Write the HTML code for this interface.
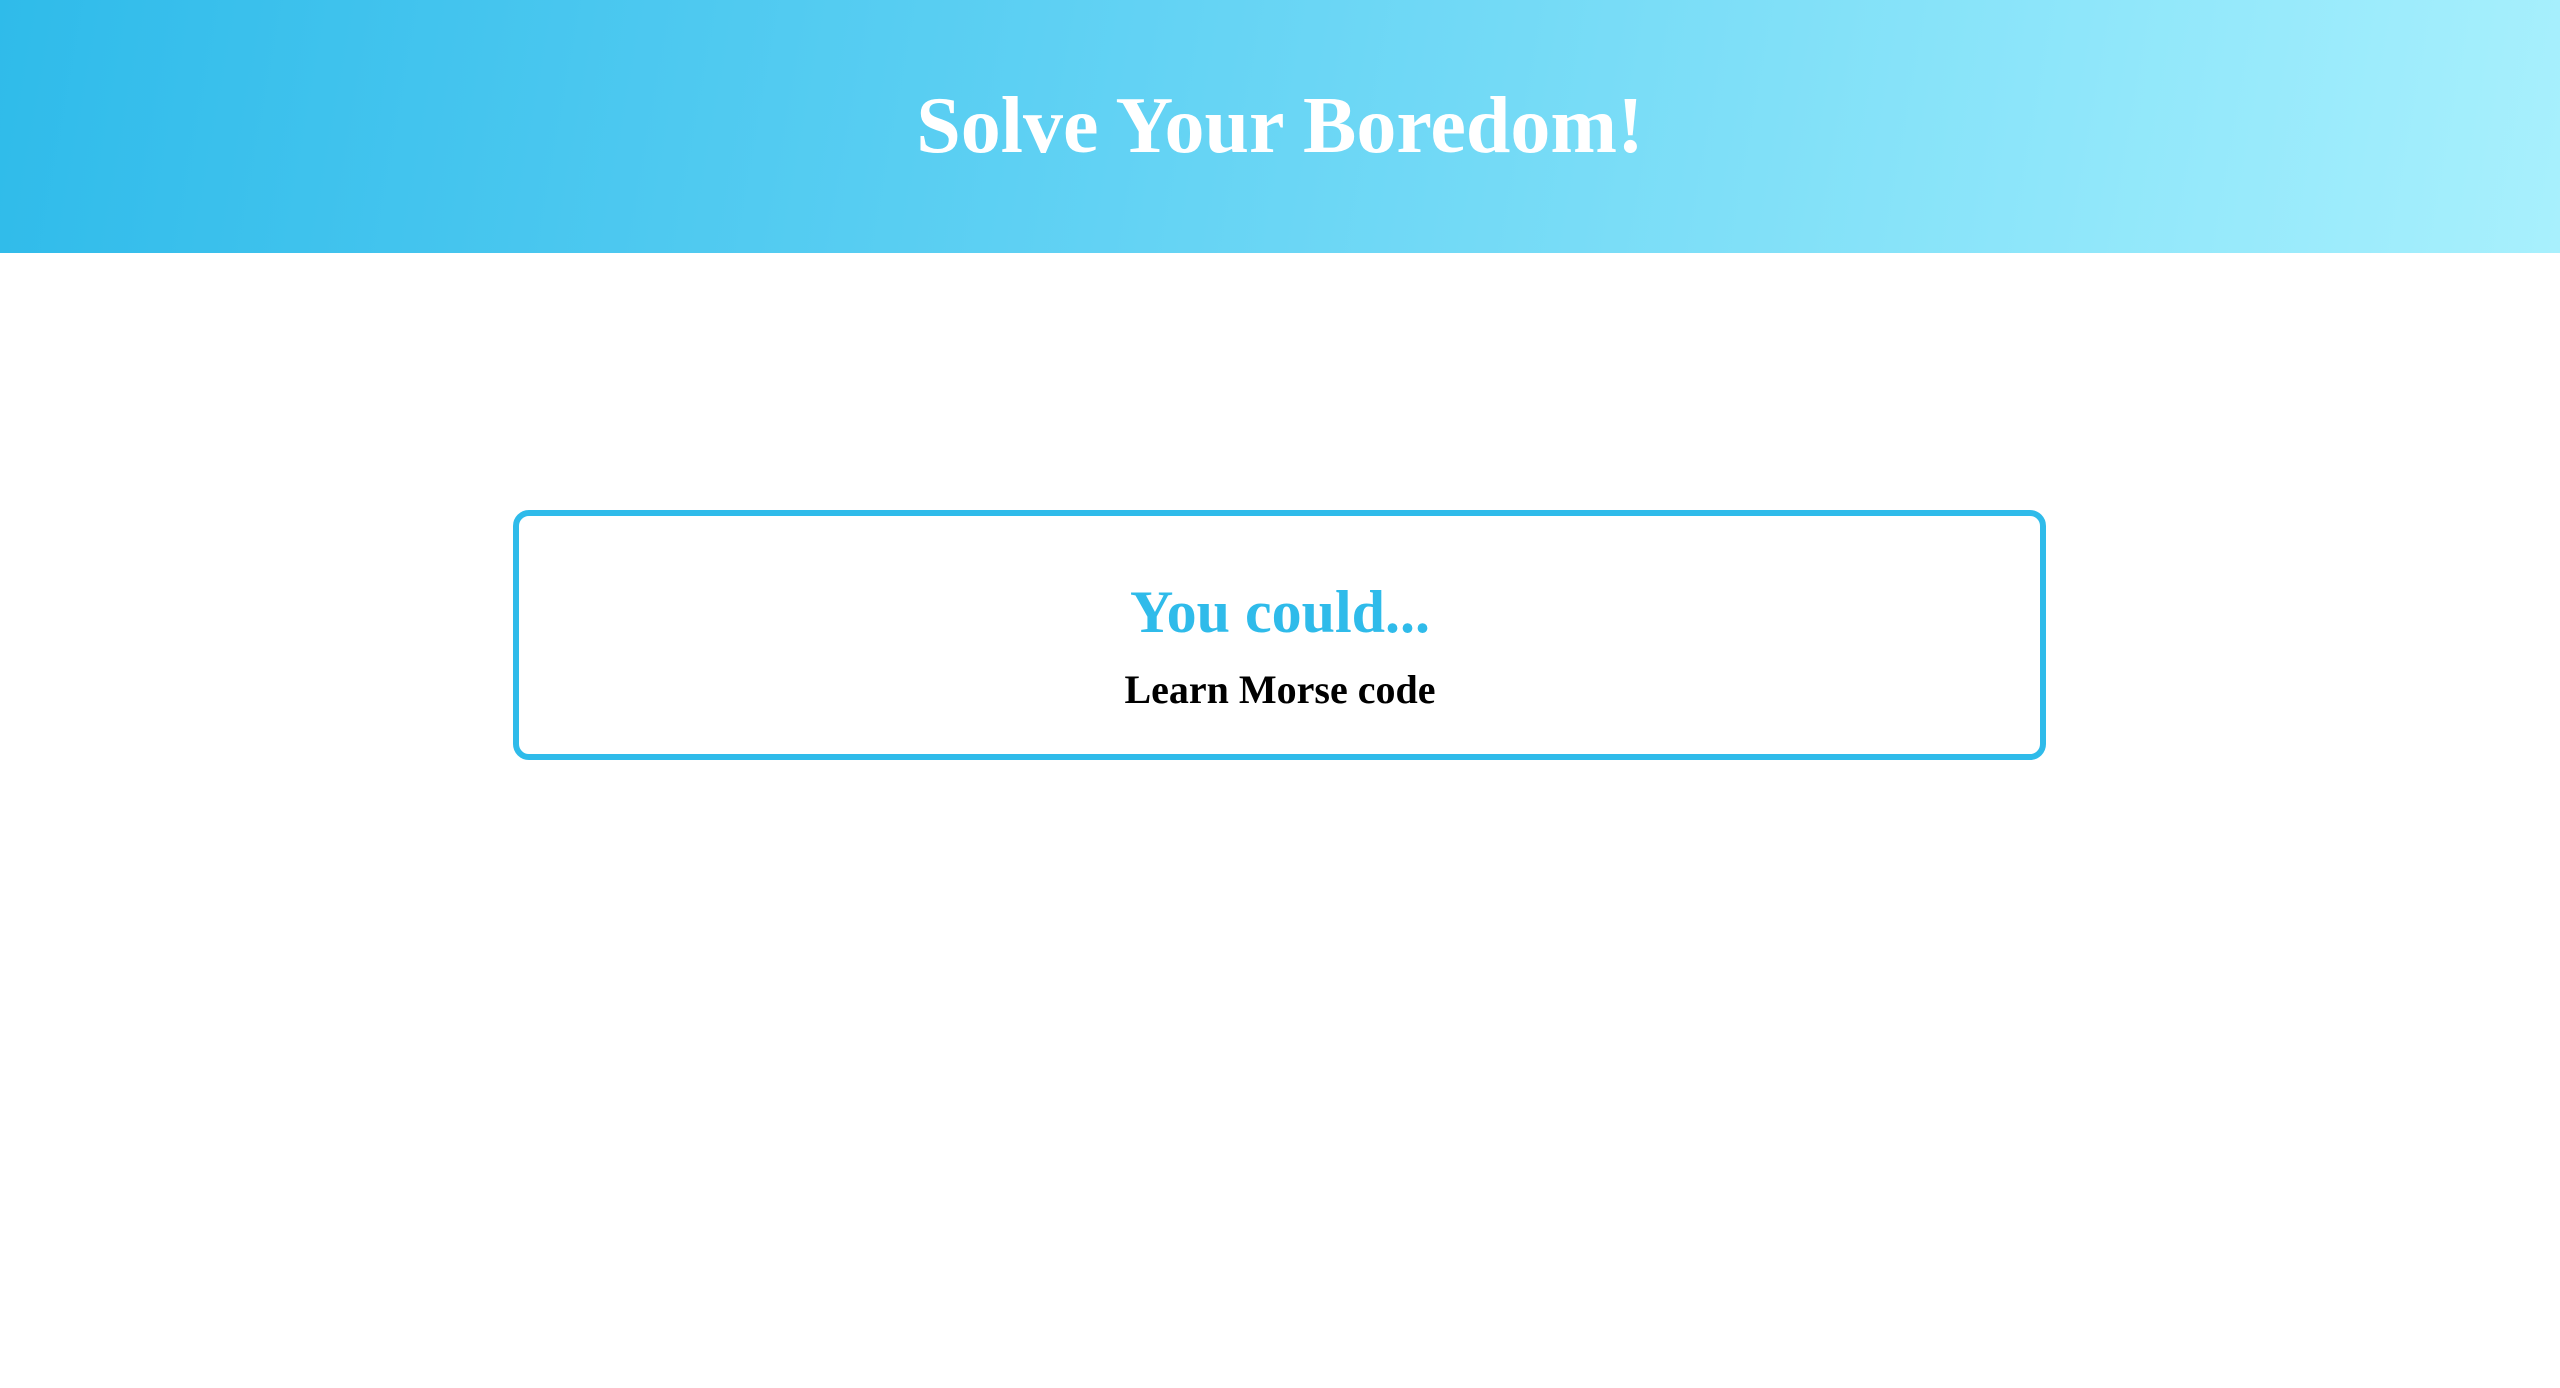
<!DOCTYPE html>
<html><head><meta charset="utf-8"><style>
html,body{margin:0;padding:0;width:2560px;height:1388px;background:#fff;overflow:hidden;font-family:"Liberation Serif",serif;font-weight:bold}
.hdr{position:absolute;left:0;top:0;width:2560px;height:253px;background:linear-gradient(100deg,#2fbbea 0%,#5dd0f3 40%,#8ee6fa 80%,#a8f0fd 100%)}
.t{position:absolute;left:0;width:100%;text-align:center;line-height:1;white-space:nowrap}
.box{position:absolute;left:513px;top:510px;width:1521px;height:238px;border:6px solid #2fbbea;border-radius:16px}
</style></head><body>
<div class="hdr"></div>
<div class="t" style="top:86px;font-size:80px;color:#fff">Solve Your Boredom!</div>
<div class="box"></div>
<div class="t" style="top:582px;font-size:60px;color:#2fbbea">You could...</div>
<div class="t" style="top:670px;font-size:40px;color:#000">Learn Morse code</div>
</body></html>
